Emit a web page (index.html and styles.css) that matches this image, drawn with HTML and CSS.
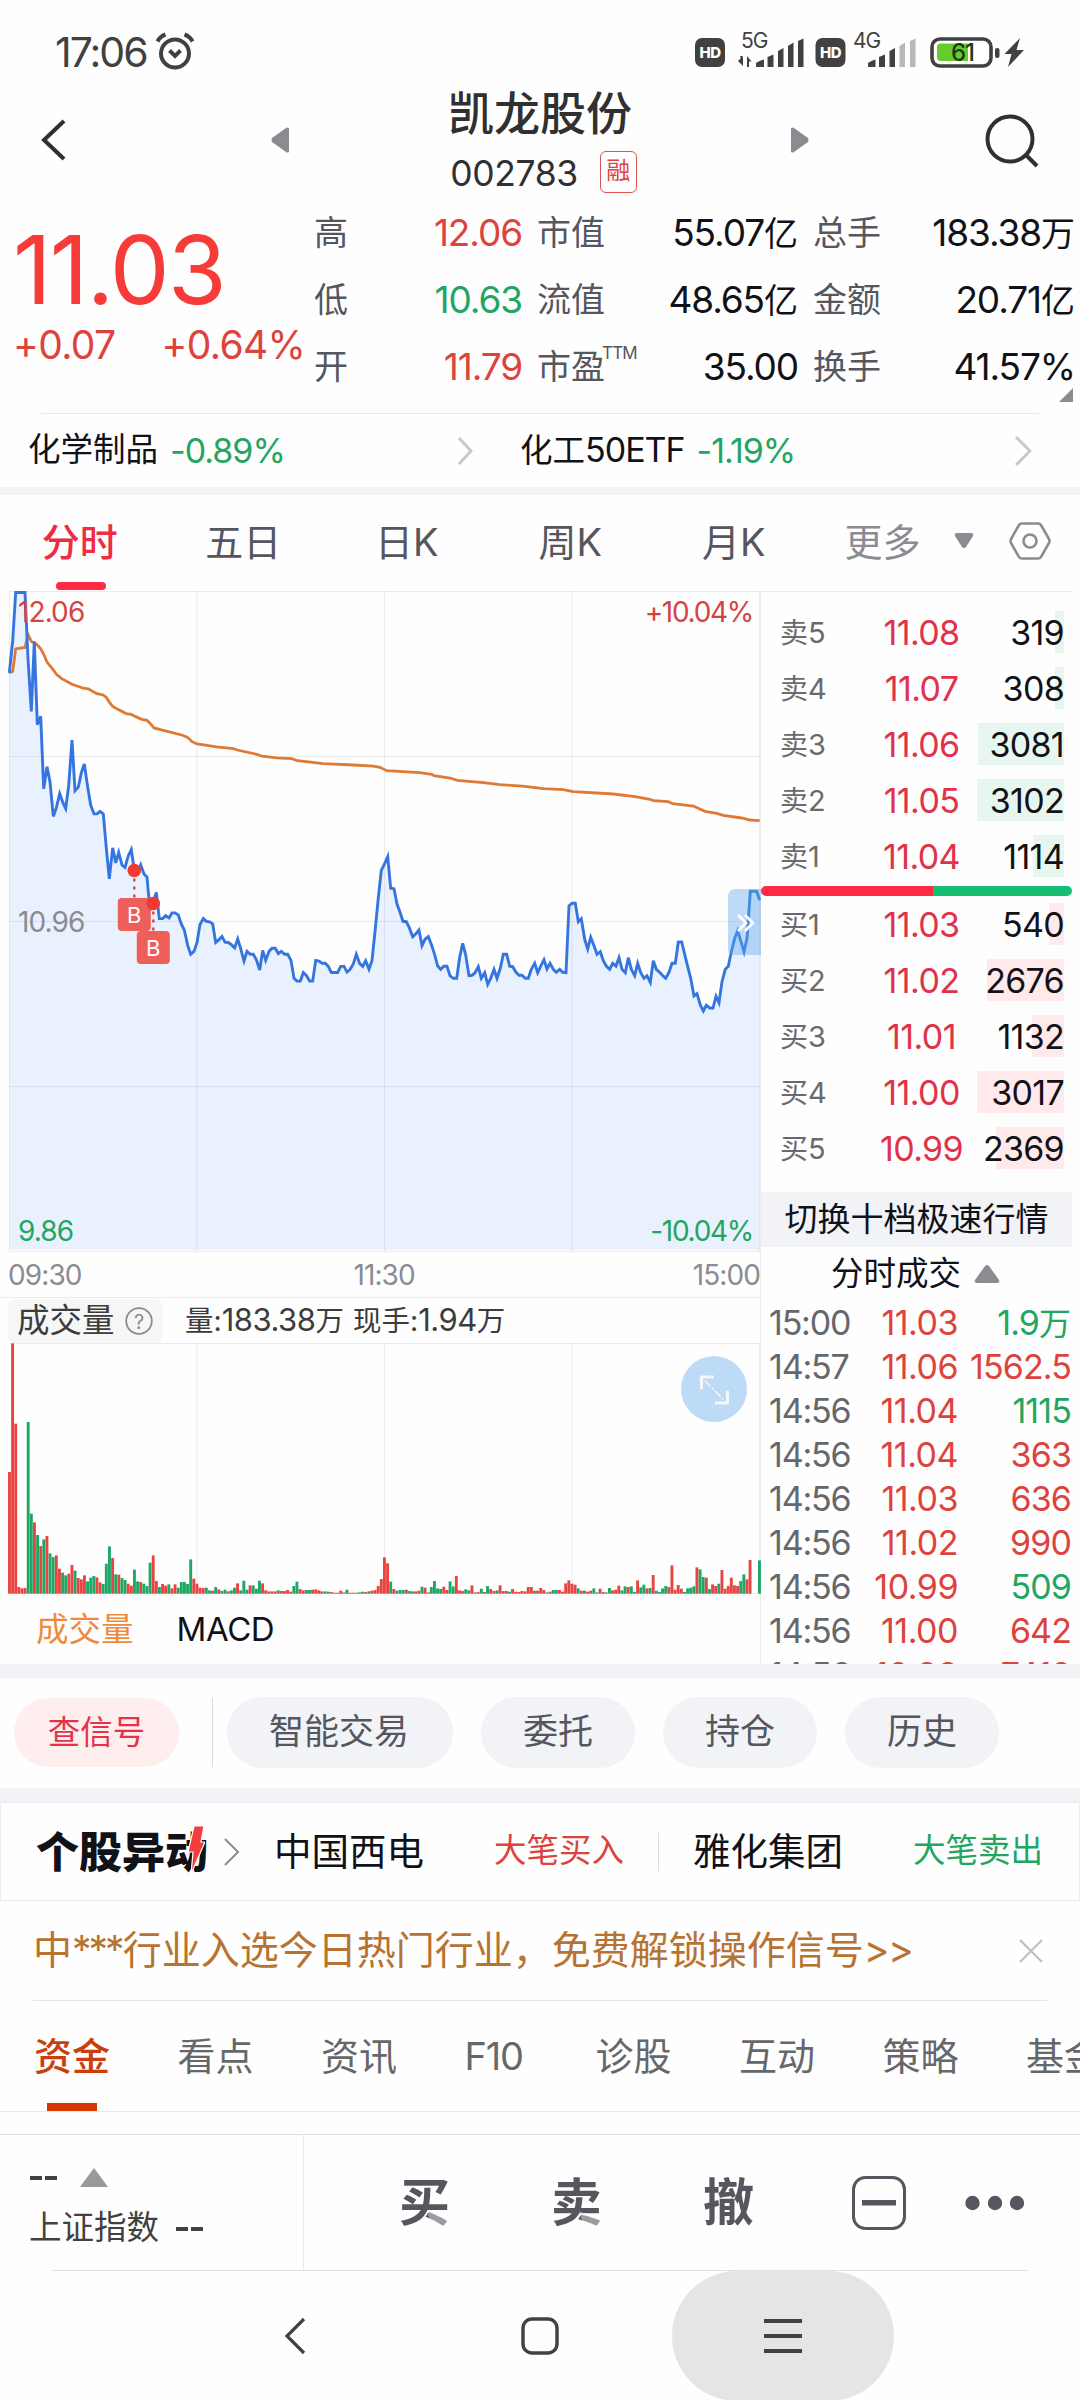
FILE: index.html
```html
<!DOCTYPE html>
<html lang="zh-CN">
<head>
<meta charset="utf-8">
<title>凯龙股份 002783</title>
<link rel="stylesheet" href="styles.css">
</head>
<body>
<div class="screen">
  <div class="status">
    <span class="clock">17:06</span>
    <svg class="alarm" width="40" height="40" viewBox="0 0 40 40" fill="none" stroke="#414141" stroke-width="4"><circle cx="20" cy="21.500" r="14"/><path d="M2.500 9.500Q5 4.500 10.500 2.500M37.500 9.500Q35 4.500 29.500 2.500M14.500 18.500l5.500 5.500 5.500-5.500"/></svg>
    <svg class="signals" width="336" height="42" viewBox="0 0 336 42">
      <g fill="#414141">
        <rect x="0" y="8" width="30" height="29" rx="7"/>
        <rect x="120.500" y="8" width="30" height="29" rx="7"/>
        <path d="M61 37v-4q4-3 8-3.500v7.500zM72.500 37V27l6-2.500V37zM83 37V21l5.500-3v19zM93 37V16l5.500-3.500V37zM103 37V11l5.500-2.500V37z"/>
        <path d="M48 26v10l-5-5zM45 26h2v6zM52 37V26l4.500 5.500H54V37z"/>
        <path d="M173 37v-4q4-3 7.500-3.500v7.500zM184 37V27l6-2.500V37zM194.500 37V21l5.500-3v19z"/>
        <path d="M325 8l-15.500 16h7l-3.500 13L329 20h-7.500z"/>
        <rect x="300" y="18" width="4.500" height="10" rx="2"/>
      </g>
      <path fill="#b9b9b9" d="M204.500 37V16l5.500-3.500V37zM215 37V11l5.500-2.500V37z"/>
      <rect x="237" y="9" width="59" height="27" rx="8" fill="#fff" stroke="#414141" stroke-width="3.600"/>
      <path fill="#68cb2c" d="M246 13.500h27v17.500h-27q-4 0-4-4v-9.500q0-4 4-4z"/>
      <g fill="#fff" class="hd"><text x="15" y="28" text-anchor="middle">HD</text><text x="135.500" y="28" text-anchor="middle">HD</text></g>
      <g class="net"><text x="46" y="18">5G</text><text x="158" y="18">4G</text></g>
      <text class="pct" x="256" y="31">61</text>
    </svg>
  </div>

  <header class="head">
    <svg class="back" width="28" height="44" viewBox="0 0 28 44" fill="none" stroke="#303030" stroke-width="4"><path d="M24 3L4 22l20 19"/></svg>
    <svg class="prev" width="18" height="26" viewBox="0 0 18 26"><path fill="#8b8b92" d="M18 1v24q-2 1-3 0L1 15q-1-2 0-4L15 1q1-1 3 0z"/></svg>
    <div class="title">
      <h1>凯龙股份</h1>
      <div class="code"><span>002783</span><b>融</b></div>
    </div>
    <svg class="next" width="18" height="26" viewBox="0 0 18 26"><path fill="#8b8b92" d="M0 1v24q2 1 3 0l14-10q1-2 0-4L3 1Q2 0 0 1z"/></svg>
    <svg class="search" width="54" height="54" viewBox="0 0 54 54" fill="none" stroke="#303030" stroke-width="4"><circle cx="25" cy="25" r="22.500"/><path d="M40 40l12 12"/></svg>
  </header>

  <section class="quote">
    <div class="last">
      <div class="price">11.03</div>
      <div class="delta"><span>+0.07</span><span>+0.64%</span></div>
    </div>
    <div class="facts">
      <i>高</i><b class="up">12.06</b><i>市值</i><b>55.07<em>亿</em></b><i>总手</i><b>183.38<em>万</em></b>
      <i>低</i><b class="down">10.63</b><i>流值</i><b>48.65<em>亿</em></b><i>金额</i><b>20.71<em>亿</em></b>
      <i>开</i><b class="up">11.79</b><i>市盈<sup>TTM</sup></i><b>35.00</b><i>换手</i><b>41.57%</b>
    </div>
    <svg class="corner" width="14" height="14" viewBox="0 0 14 14"><path fill="#8b8b92" d="M14 0v14H0z"/></svg>
  </section>

  <section class="sectors">
    <div class="sector first"><span>化学制品</span><b class="down">-0.89%</b><svg width="16" height="30" viewBox="0 0 16 30" fill="none" stroke="#c8c8ca" stroke-width="3"><path d="M2 2l12 13L2 28"/></svg></div>
    <div class="sector"><span>化工<u>50ETF</u></span><b class="down">-1.19%</b><svg width="18" height="32" viewBox="0 0 18 32" fill="none" stroke="#c8c8ca" stroke-width="3"><path d="M2 2l14 14L2 30"/></svg></div>
  </section>

  <nav class="periods">
    <span class="on">分时</span><span>五日</span><span>日K</span><span>周K</span><span>月K</span><span class="more">更多</span>
    <svg class="caret" width="20" height="16" viewBox="0 0 20 16"><path fill="#8b8b92" d="M2 0h16q2 1 1 3l-7 11q-2 2-4 0L1 3Q0 1 2 0z"/></svg>
    <svg class="gear" width="42" height="38" viewBox="0 0 42 38" fill="none" stroke="#8b8b92" stroke-width="2.600"><path d="M13 1.500h16q2 0 3 1.500l8 14q1 2 0 4l-8 14q-1 1.500-3 1.500H13q-2 0-3-1.500L2 21q-1-2 0-4l8-14q1-1.500 3-1.500z"/><circle cx="21" cy="19" r="6.500"/></svg>
  </nav>

  <section class="market">
    <div class="charts">
      <div class="plot">
        <svg id="price" width="761" height="662" viewBox="0 590 761 662"></svg>
        <div class="axis top"><span class="up">12.06</span><span class="up">+10.04%</span></div>
        <div class="axis mid"><span>10.96</span></div>
        <div class="axis bottom"><span class="down">9.86</span><span class="down">-10.04%</span></div>
        <div class="expand">
          <svg width="33" height="66" viewBox="0 0 33 66"><path fill="#5da8ee" fill-opacity=".4" d="M8 0h25v66H5q-5 0-5-5V8q0-8 8-8z"/><path fill="none" stroke="#fff" stroke-width="2.600" d="M10 26l8 8-8 8M17 26l8 8-8 8"/></svg>
        </div>
      </div>
      <div class="times"><span>09:30</span><span>11:30</span><span>15:00</span></div>
      <div class="volhead">
        <span class="pick">成交量<svg width="28" height="28" viewBox="0 0 28 28"><circle cx="14" cy="14" r="12.800" fill="none" stroke="#8b8b92" stroke-width="1.800"/><text x="14" y="21.500" text-anchor="middle">?</text></svg></span>
        <span class="stat">量:<u>183.38</u>万</span><span class="stat">现手:<u>1.94</u>万</span>
      </div>
      <div class="volplot">
        <svg id="volume" width="761" height="251" viewBox="0 1343 761 251"></svg>
        <svg class="zoomer" width="66" height="66" viewBox="0 0 66 66"><circle cx="33" cy="33" r="33" fill="#bddbf6"/><path fill="none" stroke="#fff" stroke-opacity=".8" stroke-width="3" d="M20.500 33V21h12.500M46.500 35v12H34"/><path stroke="#fff" stroke-opacity=".8" stroke-width="1.500" stroke-dasharray="8 2 2 2" d="M24 25l18 18"/></svg>
      </div>
      <div class="indicators"><span class="on">成交量</span><span>MACD</span></div>
    </div>

    <aside class="side">
      <div class="book asks">
        <div class="lvl"><i>卖<u>5</u></i><b>11.08</b><span style="--w:9px">319</span></div>
        <div class="lvl"><i>卖<u>4</u></i><b>11.07</b><span style="--w:9px">308</span></div>
        <div class="lvl"><i>卖<u>3</u></i><b>11.06</b><span style="--w:86px">3081</span></div>
        <div class="lvl"><i>卖<u>2</u></i><b>11.05</b><span style="--w:87px">3102</span></div>
        <div class="lvl"><i>卖<u>1</u></i><b>11.04</b><span style="--w:31px">1114</span></div>
      </div>
      <div class="ratio"></div>
      <div class="book bids">
        <div class="lvl"><i>买<u>1</u></i><b>11.03</b><span style="--w:15px">540</span></div>
        <div class="lvl"><i>买<u>2</u></i><b>11.02</b><span style="--w:77px">2676</span></div>
        <div class="lvl"><i>买<u>3</u></i><b>11.01</b><span style="--w:32px">1132</span></div>
        <div class="lvl"><i>买<u>4</u></i><b>11.00</b><span style="--w:87px">3017</span></div>
        <div class="lvl"><i>买<u>5</u></i><b>10.99</b><span style="--w:68px">2369</span></div>
      </div>
      <div class="ten">切换十档极速行情</div>
      <div class="tickhead">分时成交<svg width="26" height="19" viewBox="0 0 26 19"><path fill="#8b8b92" d="M11 1q2-2 4 0l10 14q1 3-2 3H3q-3 0-2-3z"/></svg></div>
      <div class="ticks">
        <div><i>15:00</i><b>11.03</b><span class="down">1.9<em>万</em></span></div>
        <div><i>14:57</i><b>11.06</b><span class="up">1562.5</span></div>
        <div><i>14:56</i><b>11.04</b><span class="down">1115</span></div>
        <div><i>14:56</i><b>11.04</b><span class="up">363</span></div>
        <div><i>14:56</i><b>11.03</b><span class="up">636</span></div>
        <div><i>14:56</i><b>11.02</b><span class="up">990</span></div>
        <div><i>14:56</i><b>10.99</b><span class="down">509</span></div>
        <div><i>14:56</i><b>11.00</b><span class="up">642</span></div>
        <div><i>14:56</i><b>10.99</b><span class="up">7410</span></div>
      </div>
    </aside>
  </section>

  <section class="chips">
    <span class="chip hot">查信号</span><hr>
    <span class="chip wide">智能交易</span><span class="chip">委托</span><span class="chip">持仓</span><span class="chip">历史</span>
  </section>

  <section class="moves">
    <div class="logo">个股异动<svg width="18" height="50" viewBox="0 0 18 50"><path fill="#f63c3c" stroke="#fff" stroke-width="1.200" d="M7 1h10l-3 16h4L4 49 6 27H1z"/></svg></div>
    <svg class="go" width="16" height="30" viewBox="0 0 16 30" fill="none" stroke="#8b8b92" stroke-width="2"><path d="M1 2l13 13L1 28"/></svg>
    <b>中国西电</b><span class="up">大笔买入</span><hr><b>雅化集团</b><span class="down">大笔卖出</span>
  </section>

  <section class="notice">
    <span>中<u class="mask">***</u>行业入选今日热门行业，免费解锁操作信号<u>&gt;&gt;</u></span>
    <svg width="24" height="24" viewBox="0 0 24 24" stroke="#bdbdbd" stroke-width="2"><path d="M1 1l22 22M23 1L1 23"/></svg>
  </section>

  <nav class="tabs">
    <span class="on">资金</span><span>看点</span><span>资讯</span><span class="f10">F10</span><span>诊股</span><span>互动</span><span>策略</span><span>基金</span>
  </nav>

  <footer class="trade">
    <div class="index">
      <div><svg class="dash" width="28" height="4" viewBox="0 0 28 4"><path fill="#414141" d="M0 0h12v4H0zM15 0h12v4H15z"/></svg><svg class="tri" width="28" height="19" viewBox="0 0 28 19"><path fill="#999" d="M14 0l14 19H0z"/></svg></div>
      <div>上证指数<svg class="dash two" width="28" height="4" viewBox="0 0 28 4"><path fill="#414141" d="M0 0h12v4H0zM15 0h12v4H15z"/></svg></div>
    </div>
    <div class="acts">
      <span class="act buy">买</span><span class="act sell">卖</span><span class="act undo">撤</span>
      <svg class="minus" width="54" height="54" viewBox="0 0 54 54"><rect x="1.500" y="1.500" width="51" height="51" rx="12" fill="none" stroke="#55565e" stroke-width="3"/><rect x="10" y="24" width="34" height="5.500" fill="#55565e"/></svg>
      <svg class="dots" width="60" height="16" viewBox="0 0 60 16" fill="#55565e"><circle cx="7.500" cy="8" r="7.200"/><circle cx="30" cy="8" r="7.200"/><circle cx="52" cy="8" r="7.200"/></svg>
    </div>
  </footer>

  <div class="sysnav">
    <svg class="sback" width="22" height="38" viewBox="0 0 22 38" fill="none" stroke="#414141" stroke-width="3.200"><path d="M20 2L3 19l17 17"/></svg>
    <svg class="shome" width="38" height="38" viewBox="0 0 38 38"><rect x="2" y="2" width="34" height="34" rx="9" fill="none" stroke="#414141" stroke-width="3.400"/></svg>
    <div class="smenu"><svg width="38" height="36" viewBox="0 0 38 36" stroke="#414141" stroke-width="3.800"><path d="M0 3h38M0 18h38M0 33h38"/></svg></div>
  </div>
</div>
<script src="chart.js"></script>
</body>
</html>
```
FILE: styles.css
```css
* { box-sizing: border-box; margin: 0; padding: 0; }
body { width: 1080px; background: #fff; }
.screen {
  width: 1080px; height: 2400px; overflow: hidden; display: flex; flex-direction: column;
  font-family: Inter, "Noto Sans CJK SC", sans-serif; font-weight: 400; color: #111118; background: #fefefe;
  line-height: 1;
}
.screen > * { flex: none; }
i, em { font-style: normal; }
b { font-weight: 400; }
u { text-decoration: none; }
hr { border: 0; width: 1px; background: #dcdcde; }
svg { display: block; flex: none; }
.up { color: #dd433d; }
.down { color: #23a562; }

.status { height: 100px; display: flex; align-items: center; padding: 4px 52px 0 55px; color: #414141; }
.clock { font-size: 41px; letter-spacing: -2px; width: 99px; white-space: nowrap; }
.alarm { margin-left: 1px; }
.signals { margin-left: auto; margin-right: -3px; margin-top: -3px; overflow: visible; }
.hd { font-size: 15px; font-weight: 800; letter-spacing: -.5px; }
.net { font-size: 21px; fill: #414141; letter-spacing: -1px; }
.pct { font-size: 24px; font-weight: 500; fill: #1d3b10; letter-spacing: -1px; }

.head { height: 105px; display: flex; align-items: center; padding: 0 41px 0 40px; }
.back { margin-top: -25px; }
.prev { margin-left: 203px; margin-top: -25px; }
.next { margin-top: -25px; }
.title { width: 502px; display: flex; flex-direction: column; align-items: center; color: #303030; height: 105px; }
.title h1 { font-size: 46px; font-weight: 500; line-height: 46px; margin-top: -10px; }
.code { display: flex; align-items: center; margin-top: 15px; padding-left: 7px; font-size: 35.500px; letter-spacing: -.400px; height: 42px; }
.code span { padding-top: 3px; }
.code b { width: 37px; height: 42px; margin-left: 22px; border: 1.500px solid #d9534f; border-radius: 6px; color: #dd433d; font-size: 24px; letter-spacing: 0; line-height: 38px; text-align: center; }
.search { margin-left: auto; margin-top: -24px; }

.quote { height: 209px; display: grid; grid-template-columns: 314px 760px; position: relative; }
.last { padding: 23px 0 0 13px; }
.price { font-size: 95px; letter-spacing: -1.800px; line-height: 84px; color: #f73b38; }
.delta { display: flex; gap: 46px; font-size: 39px; letter-spacing: -.600px; line-height: 60px; color: #dd433d; margin-top: 3px; white-space: nowrap; }
.facts { display: grid; grid-template-columns: 34px 174px 84px 192px 83px 194px; grid-auto-rows: 67px; line-height: 55px; }
.facts i { font-size: 34px; color: #55565e; white-space: nowrap; }
.facts i:nth-child(6n+3), .facts i:nth-child(6n+5) { padding-left: 15px; }
.facts b { font-size: 37px; letter-spacing: -1.100px; text-align: right; white-space: nowrap; }
.facts em { font-size: 34px; letter-spacing: 0; }
.facts sup { font-size: 17px; line-height: 0; vertical-align: 20px; letter-spacing: -.8px; margin-left: -3px; }
.corner { position: absolute; right: 7px; bottom: 12px; }

.sectors { height: 81px; margin: 0 41px 0 28px; display: flex; align-items: center; position: relative; }
.sectors::before { content: ""; position: absolute; left: 13px; right: 0; top: -1px; height: 1px; background: #e9e9eb; }
.sector { display: flex; align-items: center; flex: 1; font-size: 32.500px; white-space: nowrap; margin-top: -8px; }
.sector.first { flex: 0 0 492px; padding-right: 47px; }
.sector b, .sector u { font-size: 34px; letter-spacing: -1px; }
.sector b { margin-left: 12px; }
.sector svg { margin-left: auto; }
.sector:last-child svg { margin-right: 7px; }

.periods { height: 96px; border-top: 8px solid #f2f3f7; margin-top: -8px; display: flex; align-items: center; font-size: 38px; color: #55565e; width: 1080px; box-sizing: content-box; position: relative; }
.periods span { width: 163.500px; text-align: center; height: 96px; line-height: 94px; padding-right: 4px; }
.periods .on { color: #f02b44; position: relative; font-weight: 500; }
.periods .on::after { content: ""; position: absolute; left: 56px; bottom: 1px; width: 50px; height: 8px; border-radius: 4px; background: #ff2a43; }
.periods .more { width: 134px; color: #8b8b92; }
.caret { margin-left: 2px; margin-top: -5px; }
.gear { margin-left: 35px; margin-top: -4px; }

.market { height: 1087px; display: flex; border-bottom: 14px solid #f2f3f7; overflow: hidden; }
.charts { width: 761px; border-right: 1px solid #ececee; }
.plot { height: 662px; position: relative; margin-top: -1px; margin-right: -1px; }
.axis { position: absolute; left: 18px; right: 8px; display: flex; justify-content: space-between; font-size: 28px; letter-spacing: -.9px; color: #8b8b92; }
.axis .up { color: #d6443f; }
.axis .down { color: #23a562; }
.axis span:last-child:not(:first-child) { letter-spacing: -1.300px; }
.axis.top { top: 8px; }
.axis.mid { top: 318px; }
.axis.bottom { bottom: 7px; }
.expand { position: absolute; right: 0; top: 299px; }
.times { height: 46px; display: flex; justify-content: space-between; align-items: center; font-size: 28px; letter-spacing: -.900px; color: #8b8b92; padding-left: 8px; border-bottom: 1px solid #ececee; }
.times span:nth-child(2) { margin-right: 6px; }
.volhead { height: 45px; display: flex; align-items: center; padding-left: 8px; color: #3c3c3c; }
.pick { width: 154px; height: 44px; background: #f6f6f7; border-radius: 8px; font-size: 32.500px; line-height: 42px; display: flex; align-items: center; padding-left: 9px; gap: 10px; margin-right: 23px; }
.pick text { font-size: 20px; fill: #8b8b92; }
.stat { font-size: 28.500px; margin-right: 9px; margin-top: -2px; white-space: nowrap; }
.stat u { font-size: 31px; letter-spacing: -.500px; }
.volplot { height: 251px; position: relative; margin-right: -1px; }
.zoomer { position: absolute; right: 14px; top: 13px; }
.indicators { display: flex; gap: 43px; font-size: 32.500px; line-height: 71px; padding-left: 36px; }
.indicators .on { color: #ee8a3c; }
.indicators span:last-child { font-size: 33px; letter-spacing: -.400px; }

.side { width: 319px; display: flex; flex-direction: column; }
.side > * { flex: none; }
.book { display: flex; flex-direction: column; }
.asks { height: 295px; padding-top: 14px; border-top: 1px solid #ececee; margin-right: 8px; }
.bids { height: 296px; padding-top: 2px; }
.lvl { height: 56px; display: flex; align-items: center; }
.lvl i { width: 96px; padding: 0 0 3px 19px; font-size: 28px; color: #6a6a6e; }
.lvl i u { font-size: 29px; }
.lvl b { width: 138px; text-align: center; padding: 0 9px 2px 0; color: #e03248; font-size: 34px; letter-spacing: -.600px; }
.lvl span { width: 100px; height: 42px; line-height: 44px; margin: -4px 0 0 -31px; text-align: right; font-size: 34px; letter-spacing: -.700px; background-repeat: no-repeat; background-position: right; background-size: var(--w) 42px; }
.asks .lvl span { background-image: linear-gradient(#e7f6ee, #e7f6ee); }
.bids .lvl span { background-image: linear-gradient(#ffe9ea, #ffe9ea); }
.ratio { width: 311px; height: 10px; border-radius: 5px; background: linear-gradient(90deg, #ff2a43 172px, #17bd72 172px); }
.ten { width: 311px; height: 55px; background: #f2f3f7; font-size: 33px; line-height: 54px; text-align: center; }
.tickhead { height: 54px; display: flex; align-items: center; padding-left: 70px; font-size: 32.500px; gap: 13px; }
.ticks > div { height: 44px; display: flex; align-items: center; font-size: 34px; letter-spacing: -1.200px; }
.ticks i { width: 94px; padding-left: 8px; color: #66676b; }
.ticks b { width: 103px; text-align: right; color: #dd433d; letter-spacing: -.500px; }
.ticks span { flex: 1; text-align: right; padding-right: 9px; letter-spacing: -.900px; }
.ticks em { font-size: 32px; letter-spacing: 0; }

.chips { height: 124px; border-bottom: 14px solid #f2f3f7; display: flex; align-items: center; padding: 0 0 1px 14px; }
.chip { width: 154px; height: 71px; line-height: 69px; border-radius: 36px; background: #f2f3f7; text-align: center; font-size: 35px; color: #55565e; margin-right: 28px; }
.chip.hot { width: 165px; height: 69px; background: #ffeeee; font-size: 32.500px; color: #e5324a; margin-right: 33px; }
.chips hr { height: 69px; margin-right: 14px; }
.chip.wide { width: 226px; padding-right: 2px; }

.moves { height: 99px; border: 1px solid #ececee; display: flex; align-items: center; padding-left: 35px; white-space: nowrap; }
.logo { font-size: 43px; font-weight: 900; width: 174px; position: relative; line-height: 60px; }
.logo svg { position: absolute; left: 151px; top: 3px; }
.go { margin-left: 14px; margin-right: 34px; }
.moves b { font-size: 37.500px; }
.moves span { font-size: 32.500px; margin-left: 70px; }
.moves hr { height: 38px; margin: 0 34px; }
.moves b + span { width: 130px; }

.notice { height: 100px; margin: 0 33px; border-bottom: 1px solid #e4e4e6; display: flex; align-items: center; justify-content: space-between; padding: 0 4px 0 0; color: #b87331; font-size: 39px; white-space: nowrap; }
.notice span { margin-top: -3px; }
.notice .mask { letter-spacing: -3px; margin-right: 1px; }
.notice u:last-child { letter-spacing: -1.500px; }

.tabs { height: 111px; border-bottom: 1px solid #e9e9eb; display: flex; padding-left: 34px; font-size: 38px; line-height: 111px; color: #66676b; overflow: hidden; white-space: nowrap; }
.tabs span { width: 143.500px; flex: none; }
.tabs .f10 { width: 131px; letter-spacing: -1.200px; }
.tabs .on { color: #c9400f; position: relative; font-weight: 500; }
.tabs .on::after { content: ""; position: absolute; left: 13px; bottom: 0; width: 50px; height: 8px; background: #d83700; }

.trade { height: 137px; margin-top: 22px; border-top: 1px solid #e1e1e3; display: flex; position: relative; }
.trade::after { content: ""; position: absolute; left: 52px; right: 52px; bottom: 0; height: 1px; background: #e1e1e3; }
.index { width: 304px; border-right: 1px solid #e9e9eb; padding: 17px 0 0 29px; font-size: 32.500px; color: #414141; }
.index div { display: flex; align-items: center; height: 51px; }
.index .dash { margin-left: 1px; }
.index .tri { margin-left: 22px; }
.index .dash.two { margin-left: 17px; }
.acts { flex: 1; display: flex; align-items: center; padding-left: 95px; }
.act { font-size: 51px; font-weight: 700; width: 152px; line-height: 70px; color: transparent; background: #55565e; background-clip: text; -webkit-background-clip: text; }
.buy, .sell { background-image: conic-gradient(from 100deg at 28px 44px, #9b9ba0 60deg, #55565e 60deg); background-clip: text; -webkit-background-clip: text; }
.undo { background-image: linear-gradient(105deg, #55565e 34px, #9b9ba0 35px 42px, #55565e 43px); background-clip: text; -webkit-background-clip: text; }
.undo { background-image: none; }
.minus { margin-left: -3px; }
.dots { margin-left: 59px; }

.sysnav { height: 130px; display: flex; align-items: center; }
.sback { margin-left: 284px; }
.shome { margin-left: 215px; }
.smenu { margin-left: 113px; width: 222px; height: 130px; border-radius: 65px; background: #e5e5e5; display: flex; align-items: center; justify-content: center; }
```
FILE: chart.js
```js
// Each part of a series is stored in finer units than the page's pixels.
const NS = 'http://www.w3.org/2000/svg';
const early = ([x, y]) => [x / 3, 480 + y / 2.8];
const late = ([x, y]) => [380 + x / 3, 580 + y / 3];
const pairs = s => s.trim().split(/\s+/).map(p => p.split(',').map(Number));
const path = pts => pts.map(p => p.map(v => v.toFixed(1)).join(',')).join(' ');

function add(svg, tag, attrs) {
  const el = document.createElementNS(NS, tag);
  for (const k in attrs) el.setAttribute(k, attrs[k]);
  svg.appendChild(el);
  return el;
}

const priceLine = [
  ...pairs(`28,540 38,450 47,315 75,315 84,500 94,648 103,452 112,685 122,662 131,865 141,803 150,845 160,942 169,918 179,878 188,902 197,920 206,855 216,728 225,870 235,860 244,820 253,795 263,860 272,910 282,935 291,935 300,928 310,935 319,1030 328,1117 338,1030 347,1072 356,1043 366,1078 375,1085 385,1052 394,1035 403,1092 413,1100 422,1078 432,1103 441,1112 450,1205 459,1185 469,1155 478,1228 488,1228 497,1220 507,1226 516,1212 525,1212 535,1218 544,1243 553,1260 563,1303 572,1328 582,1320 591,1295 600,1245 610,1228 619,1236 629,1237 638,1243 647,1295 657,1287 666,1278 675,1294 685,1295 694,1301 704,1310 713,1285 722,1312 732,1347 741,1320 751,1328 760,1328 769,1343 779,1372 788,1317 797,1345 807,1320 816,1311 826,1311 835,1326 844,1320 854,1328 863,1328 873,1345 882,1395 891,1403 901,1403 910,1379 919,1387 929,1403 938,1403 947,1345 957,1347 966,1353 976,1353 985,1362 994,1379 1013,1379 1022,1362 1032,1362 1041,1378 1050,1371 1060,1355 1069,1328 1079,1354 1088,1362 1097,1346 1107,1370 1116,1345 1125,1265 1135,1170 1144,1093`).map(early),
  ...pairs(`13,853 23,830 32,925 42,926 51,972 60,997 69,1024 79,1025 88,1043 98,1070 107,1062 117,1050 126,1097 135,1078 145,1070 154,1093 163,1120 173,1158 182,1168 191,1159 201,1159 210,1187 220,1195 230,1195 239,1132 248,1090 257,1125 267,1187 276,1186 285,1178 295,1160 304,1195 314,1178 323,1213 332,1195 342,1168 351,1195 361,1165 370,1123 380,1123 389,1159 398,1160 408,1177 417,1186 426,1186 436,1195 445,1195 454,1168 464,1150 473,1178 483,1157 492,1139 501,1167 510,1150 520,1168 529,1177 539,1168 548,1177 558,1178 567,978 576,970 586,970 595,1025 604,1016 614,1078 623,1107 632,1072 642,1097 651,1123 661,1115 670,1142 679,1158 689,1168 698,1150 708,1158 717,1133 726,1168 736,1178 745,1133 754,1168 764,1187 773,1150 782,1178 792,1195 801,1187 811,1207 820,1142 829,1168 839,1177 848,1187 857,1195 867,1177 876,1150 886,1150 895,1086 905,1086 914,1123 923,1160 932,1195 942,1248 951,1241 961,1275 970,1293 979,1276 989,1284 999,1284 1008,1249 1017,1268 1026,1205 1036,1168 1045,1159 1054,1115 1064,1075 1073,1052 1083,1085 1092,1115 1101,1075 1111,934 1130,934 1139,961`).map(late)
];
const averageLine = [
  ...pairs(`28,540 38,536 47,473 75,469 84,432 94,452 110,460 122,473 131,488 141,510 155,526 170,545 185,556 216,572 250,583 265,585 290,598 310,602 319,609 328,622 338,634 355,643 378,654 394,656 403,661 425,670 441,673 450,681 462,694 490,701 545,714 562,720 575,732 591,739 650,747 700,752 712,756 770,768 785,773 830,778 875,780 892,786 970,794 1060,798 1120,801`).map(early),
  ...pairs(`0,562 20,572 118,578 155,583 162,587 210,594 232,601 310,608 360,614 435,619 490,626 550,629 580,635 700,642 765,650 810,658 820,662 865,665 878,671 940,678 975,694 1010,700 1030,706 1085,714 1110,720 1139,722`).map(late)
];

const price = document.getElementById('price');
const grid = { stroke: '#000', 'stroke-opacity': .07, 'stroke-width': 1 };
add(price, 'polygon', { points: path([...priceLine, [759.5, 1250], [9.5, 1250]]), fill: '#e9f1ff' });
[591.5, 756.5, 921.5, 1086.5, 1251.5].forEach(y => add(price, 'line', { x1: 9, x2: 760, y1: y, y2: y, ...grid }));
[9.5, 197, 384.5, 572, 759.5].forEach(x => add(price, 'line', { x1: x, x2: x, y1: 591, y2: 1251, ...grid }));
add(price, 'polyline', { points: path(averageLine), fill: 'none', stroke: '#de7a34', 'stroke-width': 2.8 });
add(price, 'polyline', { points: path(priceLine), fill: 'none', stroke: '#3575e0', 'stroke-width': 2.9 });

// Buy markers
[[134.3, 870.5, 898], [153.3, 903.5, 931]].forEach(([x, y, top]) => {
  add(price, 'line', { x1: x, x2: x, y1: y + 8, y2: top, stroke: '#d8404a', 'stroke-width': 2.4, 'stroke-dasharray': '3 5' });
  add(price, 'rect', { x: x - 16.5, y: top, width: 33, height: 33, rx: 4, fill: '#ee5f5b' });
  add(price, 'circle', { cx: x, cy: y, r: 6.8, fill: '#ee3a32' });
  add(price, 'text', { x, y: top + 24.5, 'text-anchor': 'middle', 'font-size': 22, fill: '#fff' }).textContent = 'B';
});

// One entry per minute: colour and height in thirds of a pixel
const bars = `r365 r751 r510 r20 r16 r17 g515 g240 r214 g176 r143 g163 r173 g121 g110 r115 r75 g63 g55 r60 r86 g69 r47 r43 r55 g37 g48 g53 r49 r34 g29 g90 g142 r107 g58 r57 g47 g41 r30 r24 g72 g37 r35 g30 g23 g93 r115 r38 g20 r29 r24 g28 r16 r28 g18 g35 g35 g29 g103 r45 r30 r18 r17 g18 g10 r9 g20 r13 g8 g12 r7 g10 g18 r31 g10 g39 g12 r25 g25 g15 g39 r31 r10 r7 r7 r7 g10 r8 r8 r11 r6 g23 g36 r14 r10 g11 g11 r12 r13 r10 r7 g7 g6 r5 r3 r3 r9 r4 g12 r3 r3 r3 g4 g6 r5 g7 r9 r11 r23 r44 r109 r91 g36 r14 g9 g11 g11 r12 g8 g7 r7 r9 g21 r18 r4 g20 g38 g16 g14 r21 r11 g37 g22 r53 r10 r8 g13 g10 r25 r4 r5 g15 r5 g23 r14 r8 g10 r25 r8 r8 g6 r14 r6 r5 r8 r7 r20 r20 g9 r9 r17 r11 g4 r6 g11 g11 r11 r6 r31 r40 r30 r27 g16 r9 g9 r6 r9 g16 g4 r15 r5 g4 g17 r10 r12 r24 g10 g22 r20 g22 g5 r40 g19 g27 r16 g17 r56 g9 g5 g16 g23 r20 r85 r12 r26 r15 g5 g16 g18 g22 r79 g73 g50 r48 g14 r28 r23 g30 r71 r15 r23 r48 r25 r23 g38 g58 r43 r101 r0 r0 g100`.split(' ');
const volume = document.getElementById('volume');
add(volume, 'line', { x1: 9, x2: 760, y1: 1343.5, y2: 1343.5, ...grid });
add(volume, 'line', { x1: 9, x2: 760, y1: 1593.5, y2: 1593.5, ...grid });
[197, 384.5, 572, 759.5].forEach(x => add(volume, 'line', { x1: x, x2: x, y1: 1343, y2: 1593, ...grid }));
bars.forEach((b, i) => {
  const h = b.slice(1) / 3;
  add(volume, 'rect', { x: (8 + i * 3.125).toFixed(2), y: (1593.7 - h).toFixed(2), width: 2.9, height: h.toFixed(2), fill: b[0] === 'r' ? '#e84542' : '#1fa766' });
});
```
